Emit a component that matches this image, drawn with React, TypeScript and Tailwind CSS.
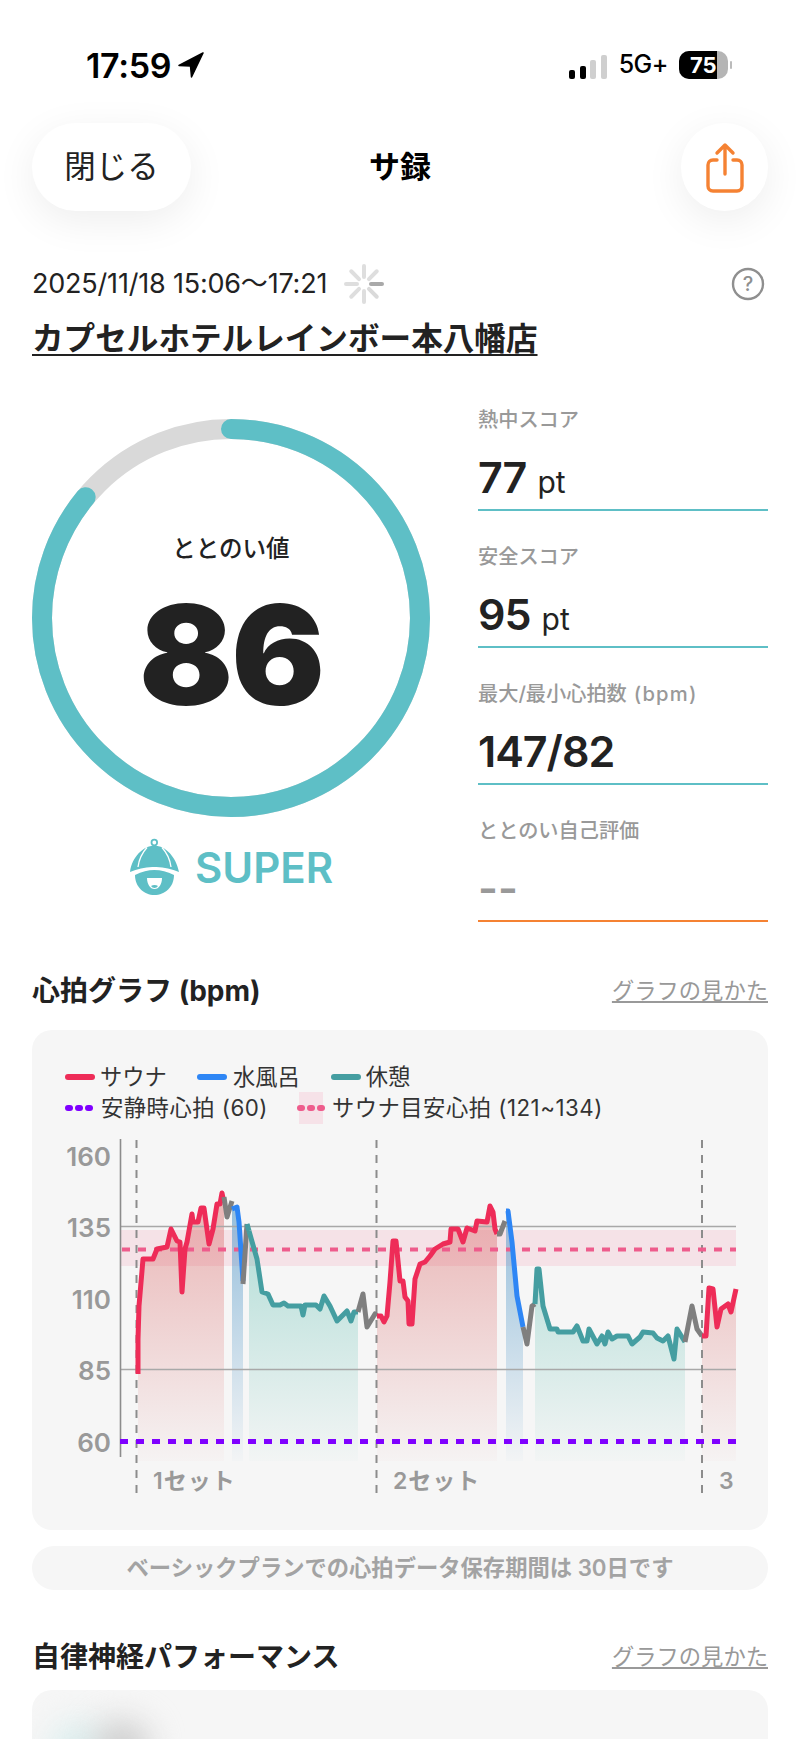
import type { ReactNode } from "react";

const RED = "#EE2C58";
const BLUE = "#2E86F5";
const TEAL = "#459EA1";
const GREY = "#7F7F7F";

type Pt = [number, number];

// heart rate trace, in page coordinates, so the svg viewBox lines up with the screenshot
const segments: { color: string; fill?: string; pts: Pt[] }[] = [
  {
    color: RED,
    fill: "url(#fillRed)",
    pts: [[138, 1375], [138, 1340], [139, 1307], [143, 1260], [153, 1260], [157, 1250], [167, 1248], [171, 1230], [177, 1242], [180, 1243], [182, 1293], [185, 1250], [187, 1243], [192, 1215], [193, 1223], [198, 1223], [201, 1209], [204, 1209], [209, 1245], [213, 1230], [217, 1205], [220, 1205], [222, 1194], [224, 1204]],
  },
  { color: GREY, pts: [[224, 1198], [227, 1218], [232, 1202]] },
  {
    color: BLUE,
    fill: "url(#fillBlue)",
    pts: [[232, 1210], [237, 1208], [239, 1223], [243, 1282]],
  },
  { color: GREY, pts: [[243, 1285], [247, 1225]] },
  {
    color: TEAL,
    pts: [[247, 1225], [249, 1232]],
  },
  {
    color: TEAL,
    fill: "url(#fillTeal)",
    pts: [[249, 1232], [257, 1260], [262, 1293], [268, 1295], [273, 1306], [280, 1306], [284, 1304], [288, 1307], [296, 1307], [301, 1307], [303, 1316], [305, 1306], [316, 1306], [320, 1310], [324, 1297], [330, 1307], [337, 1322], [343, 1316], [347, 1312], [351, 1322], [354, 1313], [358, 1313]],
  },
  { color: GREY, pts: [[358, 1313], [363, 1295], [367, 1328], [375, 1315], [377, 1317]] },
  {
    color: RED,
    fill: "url(#fillRed)",
    pts: [[377, 1317], [381, 1317], [384, 1323], [387, 1317], [390, 1283], [393, 1242], [396, 1242], [400, 1282], [403, 1282], [405, 1298], [408, 1302], [409, 1325], [412, 1325], [415, 1280], [420, 1265], [425, 1263], [430, 1257], [435, 1250], [443, 1245], [450, 1243], [451, 1230], [458, 1230], [463, 1243], [467, 1229], [475, 1232], [477, 1222], [487, 1223], [490, 1207], [493, 1213], [495, 1230], [497, 1235]],
  },
  { color: GREY, pts: [[497, 1235], [500, 1235], [505, 1222]] },
  {
    color: BLUE,
    fill: "url(#fillBlue)",
    pts: [[506, 1212], [508, 1212], [512, 1243], [517, 1297], [523, 1328]],
  },
  { color: GREY, pts: [[523, 1328], [527, 1345], [532, 1307], [535, 1305]] },
  {
    color: TEAL,
    fill: "url(#fillTeal)",
    pts: [[535, 1305], [537, 1270], [539, 1270], [543, 1307], [550, 1330], [557, 1330], [558, 1333], [573, 1333], [577, 1327], [583, 1342], [587, 1342], [589, 1330], [597, 1345], [602, 1337], [605, 1345], [608, 1333], [612, 1340], [617, 1337], [628, 1337], [632, 1345], [640, 1338], [643, 1333], [653, 1334], [657, 1339], [663, 1342], [668, 1337], [674, 1360], [677, 1330], [685, 1343]],
  },
  { color: GREY, pts: [[685, 1343], [692, 1307], [697, 1330], [702, 1337]] },
  {
    color: RED,
    fill: "url(#fillRed)",
    pts: [[702, 1337], [706, 1337], [709, 1289], [713, 1290], [717, 1328], [721, 1310], [728, 1305], [731, 1313], [736, 1290]],
  },
];

const toPoints = (pts: Pt[]) => pts.map((p) => p.join(",")).join(" ");

const yLabels = [
  { label: "160", y: 1157 },
  { label: "135", y: 1228 },
  { label: "110", y: 1300 },
  { label: "85", y: 1371 },
  { label: "60", y: 1443 },
];

function HeartChart() {
  return (
    <svg viewBox="32 1130 736 380" className="block w-[736px] h-[380px] mt-[6px]">
      <defs>
        <linearGradient id="fillRed" gradientUnits="userSpaceOnUse" x1="0" y1="1200" x2="0" y2="1462">
          <stop offset="0" stopColor="#d85a5a" stopOpacity="0.42" />
          <stop offset="1" stopColor="#d85a5a" stopOpacity="0.02" />
        </linearGradient>
        <linearGradient id="fillBlue" gradientUnits="userSpaceOnUse" x1="0" y1="1200" x2="0" y2="1462">
          <stop offset="0" stopColor="#4f96c8" stopOpacity="0.6" />
          <stop offset="1" stopColor="#4f96c8" stopOpacity="0.02" />
        </linearGradient>
        <linearGradient id="fillTeal" gradientUnits="userSpaceOnUse" x1="0" y1="1200" x2="0" y2="1462">
          <stop offset="0" stopColor="#45b5a5" stopOpacity="0.42" />
          <stop offset="1" stopColor="#45b5a5" stopOpacity="0.02" />
        </linearGradient>
      </defs>

      <rect x="120" y="1231" width="616" height="36" fill="#EE5C84" fillOpacity="0.13" />

      {segments
        .filter((s) => s.fill)
        .map((s, i) => {
          const first = s.pts[0];
          const last = s.pts[s.pts.length - 1];
          return (
            <polygon
              key={i}
              points={`${toPoints(s.pts)} ${last[0]},1462 ${first[0]},1462`}
              fill={s.fill}
            />
          );
        })}

      <line x1="120" x2="736" y1="1227.5" y2="1227.5" stroke="#A8A8A8" strokeWidth="1.6" />
      <line x1="120" x2="736" y1="1370.5" y2="1370.5" stroke="#A8A8A8" strokeWidth="1.6" />
      <line x1="120.5" x2="120.5" y1="1140" y2="1458" stroke="#8C8C8C" strokeWidth="1.6" />

      {[136.5, 376.5, 702].map((x) => (
        <line key={x} x1={x} x2={x} y1="1141" y2="1498" stroke="#8C8C8C" strokeWidth="2" strokeDasharray="8 7" />
      ))}

      <line x1="122" x2="736" y1="1250.5" y2="1250.5" stroke="#EE5C8C" strokeWidth="4" strokeDasharray="8 8" />
      <line x1="120" x2="736" y1="1442.5" y2="1442.5" stroke="#7F00FF" strokeWidth="5" strokeDasharray="8 8" />

      {segments.map((s, i) => (
        <polyline
          key={i}
          points={toPoints(s.pts)}
          fill="none"
          stroke={s.color}
          strokeWidth="5"
          strokeLinejoin="round"
        />
      ))}

      <g fill="#999999" fontWeight="600">
        {yLabels.map((l) => (
          <text key={l.label} x="111" y={l.y + 9.5} textAnchor="end" fontSize="26">
            {l.label}
          </text>
        ))}
        <text x="153" y="1490" fontSize="23" letterSpacing="1">1セット</text>
        <text x="393" y="1490" fontSize="23" letterSpacing="1">2セット</text>
        <text x="719" y="1490" fontSize="23">3</text>
      </g>
    </svg>
  );
}

function Spinner() {
  const angles = [0, 45, 90, 135, 180, 225, 270, 315];
  return (
    <svg viewBox="-20 -20 40 40" className="w-[40px] h-[40px]">
      {angles.map((a) => (
        <line
          key={a}
          x1="7"
          x2="18"
          y1="0"
          y2="0"
          transform={`rotate(${a})`}
          stroke={a === 0 ? "#A9A9A9" : a === 45 ? "#DADADA" : "#DEDEDE"}
          strokeWidth="4"
          strokeLinecap="round"
        />
      ))}
    </svg>
  );
}

function Ring() {
  const r = 189;
  const c = 2 * Math.PI * r;
  return (
    <div className="relative w-[398px] h-[398px]">
      <svg viewBox="0 0 398 398" className="w-[398px] h-[398px]">
        <circle cx="199" cy="199" r={r} fill="none" stroke="#D9D9D9" strokeWidth="20" />
        <circle
          cx="199"
          cy="199"
          r={r}
          fill="none"
          stroke="#5EBFC6"
          strokeWidth="20"
          strokeLinecap="round"
          strokeDasharray={`${c * 0.86} ${c}`}
          transform="rotate(-90 199 199)"
        />
      </svg>
      <div className="absolute inset-0 flex flex-col items-center">
        <div className="mt-[113px] text-[23.5px] leading-[34px] font-medium text-[#222]">ととのい値</div>
        <div className="mt-[19px] text-[139px] leading-[140px] font-black text-[#222] tracking-[-2px]">86</div>
      </div>
    </div>
  );
}

function Helmet() {
  return (
    <svg viewBox="0 0 70 70" className="w-[70px] h-[70px] -mx-[11px]">
      <circle cx="33.3" cy="9.5" r="2.8" fill="none" stroke="#5EBFC6" strokeWidth="1.8" />
      <path d="M9 39 C11 24 22 13 33.3 12.5 C45 13 55 24 58 39 C50 36 42 33.5 33.3 34 C25 33.5 17 36 9 39Z" fill="#5EBFC6" />
      <path d="M14 42 C21 38.5 27 37 33.3 37 C40 37 46 38.5 53 42 C53 54 44 62 33.3 62 C23 62 14 54 14 42Z" fill="#5EBFC6" />
      <path d="M26 14.5 C21 20 18 26 17 34 M41 14.5 C46 20 49 26 50 34" fill="none" stroke="#fff" strokeWidth="1.3" />
      <path d="M26 45 L41 45 C41 51 38 56 33.5 56 C29 56 26 51 26 45Z" fill="#fff" />
      <path d="M30 53 C32 51.5 35 51.5 37 53 C35.5 55.5 31.5 55.5 30 53Z" fill="#5EBFC6" />
    </svg>
  );
}

function ScoreItem({
  label,
  children,
  lineColor = "border-[#5EBFC6]",
}: {
  label: ReactNode;
  children: ReactNode;
  lineColor?: string;
}) {
  return (
    <div className={`h-[137px] border-b-2 ${lineColor} flex flex-col`}>
      <div className="h-[28px] mt-[32px] text-[20.2px] leading-[28px] font-medium text-[#999] whitespace-nowrap">
        {label}
      </div>
      <div className="mt-[18px] h-[50px] leading-[50px] whitespace-nowrap text-[#222]">{children}</div>
    </div>
  );
}

function Value({ value, unit }: { value: string; unit?: string }) {
  return (
    <>
      <span className="text-[43px] font-semibold tracking-[-1px]">{value}</span>
      {unit && <span className="ml-[11px] text-[30px]">{unit}</span>}
    </>
  );
}

function SectionHeading({ title }: { title: string }) {
  return (
    <div className="flex items-center justify-between h-[40px]">
      <h2 className="text-[28px] font-bold text-[#222] leading-[40px]">{title}</h2>
      <a className="text-[22.3px] text-[#999] underline underline-offset-2 leading-[40px]">グラフの見かた</a>
    </div>
  );
}

function LegendLine({ className }: { className: string }) {
  return <span className={`w-[30px] h-[6px] rounded-full ${className}`} />;
}

function Dots({ className }: { className: string }) {
  return (
    <span className="flex gap-[2px]">
      <span className={`w-[8px] h-[6px] rounded-full ${className}`} />
      <span className={`w-[8px] h-[6px] rounded-full ${className}`} />
      <span className={`w-[8px] h-[6px] rounded-full ${className}`} />
    </span>
  );
}

export default function App() {
  return (
    <div className="w-[800px] h-[1739px] overflow-hidden bg-white font-[Inter,'Noto_Sans_CJK_JP',sans-serif] text-[#222]">
      {/* status bar */}
      <div className="flex items-center justify-between h-[50px] mt-[40px] pl-[86px] pr-[68px]">
        <div className="flex items-center gap-[7px]">
          <span className="text-[34px] font-semibold tracking-[-0.3px] text-black">17:59</span>
          <svg viewBox="0 0 26 26" className="w-[26px] h-[26px]">
            <path d="M25 1 L1 13.5 L12.5 14 L13.5 25 Z" fill="#000" stroke="#000" strokeWidth="1.5" strokeLinejoin="round" />
          </svg>
        </div>
        <div className="flex items-center">
          <div className="flex items-end gap-[4.5px] h-[24px] mt-[3px]">
            <span className="w-[6px] h-[9px] rounded-[2px] bg-black" />
            <span className="w-[6px] h-[13px] rounded-[2px] bg-black" />
            <span className="w-[6px] h-[19px] rounded-[2px] bg-[#cfcfcf]" />
            <span className="w-[6px] h-[24px] rounded-[2px] bg-[#cfcfcf]" />
          </div>
          <span className="ml-[12px] text-[25px] font-medium text-black tracking-[-0.5px]">5G+</span>
          <div className="ml-[11px] flex items-center">
            <div className="relative w-[49px] h-[28px] rounded-[10px] overflow-hidden bg-[#b5b5b5]">
              <div className="w-[38px] h-[28px] bg-black" />
              <span className="absolute inset-0 flex items-center pl-[11px] text-[22px] font-bold text-white">75</span>
            </div>
            <span className="ml-[2px] w-[2px] h-[8px] rounded-full bg-[#bbb]" />
          </div>
        </div>
      </div>

      {/* nav */}
      <div className="relative flex items-center justify-between h-[88px] mt-[33px] px-[32px]">
        <button className="w-[159px] h-[88px] rounded-[44px] bg-white shadow-[0_10px_40px_rgba(0,0,0,0.07)] text-[31.5px] text-[#222]">
          閉じる
        </button>
        <div className="absolute left-0 right-0 text-center text-[31px] font-bold text-black pointer-events-none">サ録</div>
        <button className="flex items-center justify-center w-[87px] h-[88px] rounded-full bg-white shadow-[0_10px_40px_rgba(0,0,0,0.07)]">
          <svg viewBox="0 0 42 52" className="w-[42px] h-[52px]" fill="none" stroke="#F58233" strokeWidth="3.4" strokeLinecap="round" strokeLinejoin="round">
            <path d="M21 33 V5 M13 12 L21 4 L29 12" />
            <path d="M13 19 H9 C6 19 4 21 4 24 V45 C4 48 6 50 9 50 H33 C36 50 38 48 38 45 V24 C38 21 36 19 33 19 H29" />
          </svg>
        </button>
      </div>

      {/* session info */}
      <div className="mt-[53px] px-[32px]">
        <div className="flex items-center justify-between h-[40px]">
          <div className="flex items-center">
            <span className="text-[27px] text-[#222] tracking-[-0.2px]">2025/11/18 15:06～17:21</span>
            <span className="ml-[17px]">
              <Spinner />
            </span>
          </div>
          <svg viewBox="0 0 36 36" className="w-[36px] h-[36px] mr-[2px]">
            <circle cx="18" cy="18" r="15" fill="none" stroke="#8f8f8f" strokeWidth="2.4" />
            <text x="18" y="25" textAnchor="middle" fontSize="20" fill="#8f8f8f" fontWeight="500">?</text>
          </svg>
        </div>
        <div className="mt-[15px] text-[31.6px] leading-[40px] font-semibold text-[#222] underline underline-offset-[4px] decoration-2 whitespace-nowrap">
          カプセルホテルレインボー本八幡店
        </div>
      </div>

      {/* score */}
      <div className="flex mt-[15px] px-[32px]">
        <div className="flex flex-col items-center w-[398px]">
          <div className="mt-[45px]">
            <Ring />
          </div>
          <div className="flex items-center mt-[16px] ml-[3px]">
            <Helmet />
            <span className="ml-[15px] text-[42px] font-semibold text-[#5EBFC6] leading-[60px]">SUPER</span>
          </div>
        </div>
        <div className="ml-[48px] w-[290px]">
          <ScoreItem label="熱中スコア">
            <Value value="77" unit="pt" />
          </ScoreItem>
          <ScoreItem label="安全スコア">
            <Value value="95" unit="pt" />
          </ScoreItem>
          <ScoreItem
            label={
              <>
                最大/最小心拍数<span className="ml-[7px] tracking-[1.2px]">(bpm)</span>
              </>
            }
          >
            <Value value="147/82" />
          </ScoreItem>
          <ScoreItem label="ととのい自己評価" lineColor="border-[#F58233]">
            <span className="text-[43px] font-semibold text-[#999]">--</span>
          </ScoreItem>
        </div>
      </div>

      {/* heart rate */}
      <div className="mt-[49px] px-[32px]">
        <SectionHeading title="心拍グラフ (bpm)" />
        <div className="mt-[19px] h-[500px] rounded-[20px] bg-[#F6F6F6] overflow-hidden">
          <div className="pt-[31px] pl-[33px] text-[22.3px] leading-[31px] text-[#333] whitespace-nowrap">
            <div className="flex items-center h-[31px]">
              <LegendLine className="bg-[#EE2C58]" />
              <span className="ml-[5px]">サウナ</span>
              <span className="ml-[30px]"><LegendLine className="block bg-[#2E86F5]" /></span>
              <span className="ml-[6px]">水風呂</span>
              <span className="ml-[31px]"><LegendLine className="block bg-[#459EA1]" /></span>
              <span className="ml-[5px]">休憩</span>
            </div>
            <div className="flex items-center h-[31px] tracking-[0.5px]">
              <Dots className="bg-[#7F00FF]" />
              <span className="ml-[8px]">安静時心拍 (60)</span>
              <span className="flex items-center justify-center ml-[31px] w-[24px] h-[32px] bg-[#f6e2e8] overflow-visible">
                <Dots className="bg-[#EE5C8C] shrink-0" />
              </span>
              <span className="ml-[9px]">サウナ目安心拍 (121~134)</span>
            </div>
          </div>
          <HeartChart />
        </div>
        <div className="mt-[16px] h-[44px] rounded-[22px] bg-[#F6F6F6] flex items-center justify-center text-[22.3px] font-semibold text-[#a3a3a3]">
          ベーシックプランでの心拍データ保存期間は 30日です
        </div>
      </div>

      {/* autonomic */}
      <div className="mt-[47px] px-[32px]">
        <SectionHeading title="自律神経パフォーマンス" />
        <div className="relative mt-[13px] h-[300px] rounded-[20px] bg-[#F6F6F6] overflow-hidden">
          <div className="absolute left-[18px] top-[32px] w-[56px] h-[56px] rounded-full bg-[#dbeeee] blur-lg" />
          <div className="absolute left-[62px] top-[30px] w-[56px] h-[56px] rounded-full bg-[#cdcdcd] blur-lg" />
        </div>
      </div>
    </div>
  );
}
